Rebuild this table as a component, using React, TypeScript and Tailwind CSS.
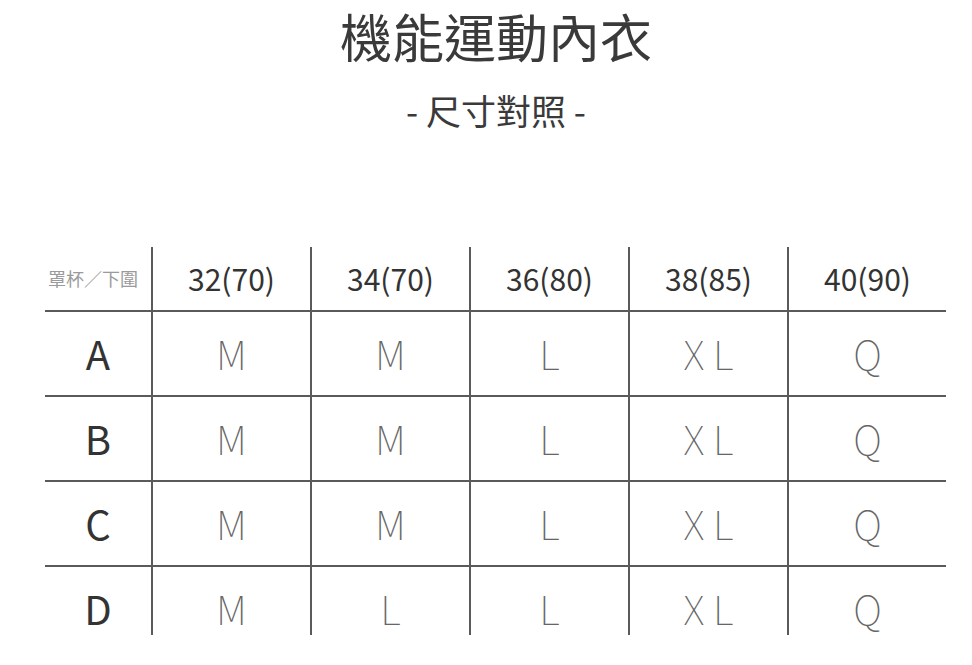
const cols = ["32(70)", "34(70)", "36(80)", "38(85)", "40(90)"];

const rows: { cup: string; sizes: string[] }[] = [
  { cup: "A", sizes: ["M", "M", "L", "X L", "Q"] },
  { cup: "B", sizes: ["M", "M", "L", "X L", "Q"] },
  { cup: "C", sizes: ["M", "M", "L", "X L", "Q"] },
  { cup: "D", sizes: ["M", "L", "L", "X L", "Q"] },
];

const cjk = "font-['Noto_Sans_CJK_TC','Noto_Sans',sans-serif]";

export default function App() {
  return (
    <div className={`min-h-[665px] w-[972px] bg-white ${cjk}`}>
      <div className="ml-[45px] w-[902px]">
        <h1 className="text-center text-[52px] leading-[1.4] font-normal text-[#3a3a3a]">
          機能運動內衣
        </h1>
        <p className="mt-[19px] text-center text-[35px] leading-none text-[#3a3a3a]">
          - 尺寸對照 -
        </p>

        <div className="mt-[120px] grid grid-cols-[106px_repeat(5,159px)]">
          {/* header row */}
          <div className="flex h-[63px] items-center pl-[3px] text-[18px] text-[#9a9a9a]">
            罩杯／下圍
          </div>
          {cols.map((c) => (
            <div
              key={c}
              className="flex h-[63px] items-center justify-center border-l-2 border-[#5a5a5a] text-[30px] text-[#333]"
            >
              {c}
            </div>
          ))}

          {rows.map((r, i) => {
            const last = i === rows.length - 1;
            const h = last ? "h-[70px]" : "h-[85px]";
            return [
              <div key={r.cup} className={`${h} border-t-2 border-[#5a5a5a]`}>
                <div className="flex h-[83px] items-center justify-center text-[40px] text-[#333]">
                  {r.cup}
                </div>
              </div>,
              ...r.sizes.map((s, j) => (
                <div
                  key={r.cup + j}
                  className={`${h} border-t-2 border-l-2 border-[#5a5a5a]`}
                >
                  <div className="flex h-[83px] items-center justify-center text-[40px] font-thin text-[#666]">
                    {s}
                  </div>
                </div>
              )),
            ];
          })}
        </div>
      </div>
    </div>
  );
}
